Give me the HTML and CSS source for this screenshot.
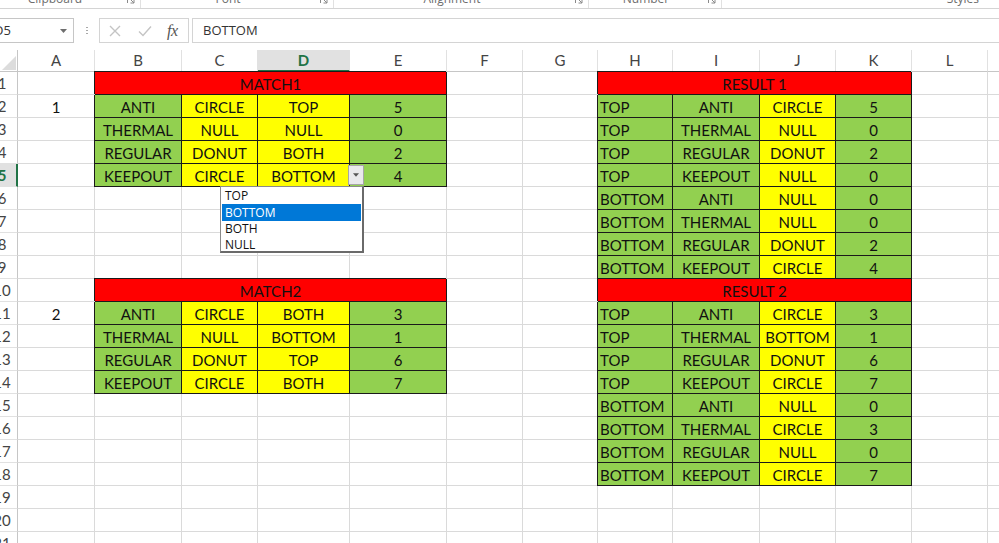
FILE: index.html
```html
<!DOCTYPE html>
<html>
<head>
<meta charset="utf-8">
<link rel="stylesheet" href="styles.css">
</head>
<body>
<div class="app">
  <div class="ribbon">
    <div class="grp g1"><span>Clipboard</span><svg class="launch" viewBox="0 0 8 8"><path d="M0.5 7V0.5H7M2.5 2.5l4.5 4.5M7 3.5V7H3.5"/></svg></div>
    <div class="grp g2"><span>Font</span><svg class="launch" viewBox="0 0 8 8"><path d="M0.5 7V0.5H7M2.5 2.5l4.5 4.5M7 3.5V7H3.5"/></svg></div>
    <div class="grp g3"><span>Alignment</span><svg class="launch" viewBox="0 0 8 8"><path d="M0.5 7V0.5H7M2.5 2.5l4.5 4.5M7 3.5V7H3.5"/></svg></div>
    <div class="grp g4"><span>Number</span><svg class="launch" viewBox="0 0 8 8"><path d="M0.5 7V0.5H7M2.5 2.5l4.5 4.5M7 3.5V7H3.5"/></svg></div>
    <div class="grp g5"><span>Styles</span></div>
  </div>

  <div class="fbar">
    <div class="namebox"><span class="nbtext">D5</span><svg class="nbarrow" viewBox="0 0 7 4"><path d="M0 0h7L3.5 4z"/></svg></div>
    <div class="dots"><i></i><i></i><i></i></div>
    <div class="fxbox">
      <svg class="ico" viewBox="0 0 12 12"><path d="M1 1l10 10M11 1L1 11"/></svg>
      <svg class="ico" viewBox="0 0 14 12"><path d="M1 6.5l4 4L13 1.5"/></svg>
      <span class="fx">fx</span>
    </div>
    <div class="finput">BOTTOM</div>
  </div>

  <div class="sheet">
    <!-- header row -->
    <div class="corner"><svg viewBox="0 0 18 22"><path d="M16 6v14H2z"/></svg></div>
    <div class="ch">A</div><div class="ch">B</div><div class="ch">C</div><div class="ch act">D</div><div class="ch">E</div><div class="ch">F</div><div class="ch">G</div><div class="ch">H</div><div class="ch">I</div><div class="ch">J</div><div class="ch">K</div><div class="ch">L</div><div class="ch">M</div>

    <!-- row 1 -->
    <div class="rh"><span>1</span></div><div class="c"></div>
    <div class="c r m4">MATCH1</div>
    <div class="c"></div><div class="c"></div>
    <div class="c r m4">RESULT 1</div>
    <div class="c"></div><div class="c"></div>

    <!-- row 2 -->
    <div class="rh"><span>2</span></div><div class="c">1</div>
    <div class="c g fl">ANTI</div><div class="c y">CIRCLE</div><div class="c y">TOP</div><div class="c g">5</div>
    <div class="c"></div><div class="c"></div>
    <div class="c g fl l">TOP</div><div class="c g">ANTI</div><div class="c y">CIRCLE</div><div class="c g">5</div>
    <div class="c"></div><div class="c"></div>

    <!-- row 3 -->
    <div class="rh"><span>3</span></div><div class="c"></div>
    <div class="c g fl">THERMAL</div><div class="c y">NULL</div><div class="c y">NULL</div><div class="c g">0</div>
    <div class="c"></div><div class="c"></div>
    <div class="c g fl l">TOP</div><div class="c g">THERMAL</div><div class="c y">NULL</div><div class="c g">0</div>
    <div class="c"></div><div class="c"></div>

    <!-- row 4 -->
    <div class="rh"><span>4</span></div><div class="c"></div>
    <div class="c g fl">REGULAR</div><div class="c y">DONUT</div><div class="c y">BOTH</div><div class="c g">2</div>
    <div class="c"></div><div class="c"></div>
    <div class="c g fl l">TOP</div><div class="c g">REGULAR</div><div class="c y">DONUT</div><div class="c g">2</div>
    <div class="c"></div><div class="c"></div>

    <!-- row 5 -->
    <div class="rh act"><span>5</span></div><div class="c"></div>
    <div class="c g fl">KEEPOUT</div><div class="c y">CIRCLE</div>
    <div class="c y cur">BOTTOM
      <div class="ddbtn"><svg viewBox="0 0 7 4"><path d="M0 0h7L3.5 4z"/></svg></div>
      <ul class="ddlist">
        <li>TOP</li>
        <li class="sel">BOTTOM</li>
        <li>BOTH</li>
        <li>NULL</li>
      </ul>
    </div>
    <div class="c g">4</div>
    <div class="c"></div><div class="c"></div>
    <div class="c g fl l">TOP</div><div class="c g">KEEPOUT</div><div class="c y">NULL</div><div class="c g">0</div>
    <div class="c"></div><div class="c"></div>

    <!-- row 6 -->
    <div class="rh"><span>6</span></div><div class="c"></div>
    <div class="c"></div><div class="c"></div><div class="c"></div><div class="c"></div>
    <div class="c"></div><div class="c"></div>
    <div class="c g fl l">BOTTOM</div><div class="c g">ANTI</div><div class="c y">NULL</div><div class="c g">0</div>
    <div class="c"></div><div class="c"></div>

    <!-- row 7 -->
    <div class="rh"><span>7</span></div><div class="c"></div>
    <div class="c"></div><div class="c"></div><div class="c"></div><div class="c"></div>
    <div class="c"></div><div class="c"></div>
    <div class="c g fl l">BOTTOM</div><div class="c g">THERMAL</div><div class="c y">NULL</div><div class="c g">0</div>
    <div class="c"></div><div class="c"></div>

    <!-- row 8 -->
    <div class="rh"><span>8</span></div><div class="c"></div>
    <div class="c"></div><div class="c"></div><div class="c"></div><div class="c"></div>
    <div class="c"></div><div class="c"></div>
    <div class="c g fl l">BOTTOM</div><div class="c g">REGULAR</div><div class="c y">DONUT</div><div class="c g">2</div>
    <div class="c"></div><div class="c"></div>

    <!-- row 9 -->
    <div class="rh"><span>9</span></div><div class="c"></div>
    <div class="c"></div><div class="c"></div><div class="c"></div><div class="c"></div>
    <div class="c"></div><div class="c"></div>
    <div class="c g fl l">BOTTOM</div><div class="c g">KEEPOUT</div><div class="c y">CIRCLE</div><div class="c g">4</div>
    <div class="c"></div><div class="c"></div>

    <!-- row 10 -->
    <div class="rh"><span>10</span></div><div class="c"></div>
    <div class="c r m4">MATCH2</div>
    <div class="c"></div><div class="c"></div>
    <div class="c r m4">RESULT 2</div>
    <div class="c"></div><div class="c"></div>

    <!-- row 11 -->
    <div class="rh"><span>11</span></div><div class="c">2</div>
    <div class="c g fl">ANTI</div><div class="c y">CIRCLE</div><div class="c y">BOTH</div><div class="c g">3</div>
    <div class="c"></div><div class="c"></div>
    <div class="c g fl l">TOP</div><div class="c g">ANTI</div><div class="c y">CIRCLE</div><div class="c g">3</div>
    <div class="c"></div><div class="c"></div>

    <!-- row 12 -->
    <div class="rh"><span>12</span></div><div class="c"></div>
    <div class="c g fl">THERMAL</div><div class="c y">NULL</div><div class="c y">BOTTOM</div><div class="c g">1</div>
    <div class="c"></div><div class="c"></div>
    <div class="c g fl l">TOP</div><div class="c g">THERMAL</div><div class="c y">BOTTOM</div><div class="c g">1</div>
    <div class="c"></div><div class="c"></div>

    <!-- row 13 -->
    <div class="rh"><span>13</span></div><div class="c"></div>
    <div class="c g fl">REGULAR</div><div class="c y">DONUT</div><div class="c y">TOP</div><div class="c g">6</div>
    <div class="c"></div><div class="c"></div>
    <div class="c g fl l">TOP</div><div class="c g">REGULAR</div><div class="c y">DONUT</div><div class="c g">6</div>
    <div class="c"></div><div class="c"></div>

    <!-- row 14 -->
    <div class="rh"><span>14</span></div><div class="c"></div>
    <div class="c g fl">KEEPOUT</div><div class="c y">CIRCLE</div><div class="c y">BOTH</div><div class="c g">7</div>
    <div class="c"></div><div class="c"></div>
    <div class="c g fl l">TOP</div><div class="c g">KEEPOUT</div><div class="c y">CIRCLE</div><div class="c g">7</div>
    <div class="c"></div><div class="c"></div>

    <!-- row 15 -->
    <div class="rh"><span>15</span></div><div class="c"></div>
    <div class="c"></div><div class="c"></div><div class="c"></div><div class="c"></div>
    <div class="c"></div><div class="c"></div>
    <div class="c g fl l">BOTTOM</div><div class="c g">ANTI</div><div class="c y">NULL</div><div class="c g">0</div>
    <div class="c"></div><div class="c"></div>

    <!-- row 16 -->
    <div class="rh"><span>16</span></div><div class="c"></div>
    <div class="c"></div><div class="c"></div><div class="c"></div><div class="c"></div>
    <div class="c"></div><div class="c"></div>
    <div class="c g fl l">BOTTOM</div><div class="c g">THERMAL</div><div class="c y">CIRCLE</div><div class="c g">3</div>
    <div class="c"></div><div class="c"></div>

    <!-- row 17 -->
    <div class="rh"><span>17</span></div><div class="c"></div>
    <div class="c"></div><div class="c"></div><div class="c"></div><div class="c"></div>
    <div class="c"></div><div class="c"></div>
    <div class="c g fl l">BOTTOM</div><div class="c g">REGULAR</div><div class="c y">NULL</div><div class="c g">0</div>
    <div class="c"></div><div class="c"></div>

    <!-- row 18 -->
    <div class="rh"><span>18</span></div><div class="c"></div>
    <div class="c"></div><div class="c"></div><div class="c"></div><div class="c"></div>
    <div class="c"></div><div class="c"></div>
    <div class="c g fl l">BOTTOM</div><div class="c g">KEEPOUT</div><div class="c y">CIRCLE</div><div class="c g">7</div>
    <div class="c"></div><div class="c"></div>

    <!-- row 19 -->
    <div class="rh"><span>19</span></div><div class="c"></div>
    <div class="c"></div><div class="c"></div><div class="c"></div><div class="c"></div>
    <div class="c"></div><div class="c"></div>
    <div class="c"></div><div class="c"></div><div class="c"></div><div class="c"></div>
    <div class="c"></div><div class="c"></div>

    <!-- row 20 -->
    <div class="rh"><span>20</span></div><div class="c"></div>
    <div class="c"></div><div class="c"></div><div class="c"></div><div class="c"></div>
    <div class="c"></div><div class="c"></div>
    <div class="c"></div><div class="c"></div><div class="c"></div><div class="c"></div>
    <div class="c"></div><div class="c"></div>

    <!-- row 21 -->
    <div class="rh"><span>21</span></div><div class="c"></div>
    <div class="c"></div><div class="c"></div><div class="c"></div><div class="c"></div>
    <div class="c"></div><div class="c"></div>
    <div class="c"></div><div class="c"></div><div class="c"></div><div class="c"></div>
    <div class="c"></div><div class="c"></div>
  </div>
</div>
</body>
</html>
```

FILE: styles.css
```css
* { box-sizing: border-box; }

html, body {
  margin: 0;
  padding: 0;
  background: #ffffff;
}

.app {
  width: 999px;
  height: 543px;
  overflow: hidden;
  background: #ffffff;
}

/* ---------- ribbon group labels (cut off) ---------- */
.ribbon {
  height: 9px;
  border-bottom: 1px solid #d4d4d4;
  display: flex;
  overflow: hidden;
  font-family: "Open Sans", "Liberation Sans", sans-serif;
  font-size: 12px;
  color: #6d6d6d;
}

.grp {
  position: relative;
  height: 8px;
  display: flex;
  justify-content: center;
  border-right: 1px solid #e1e1e1;
  padding-right: 18px;
  flex: none;
}

.grp span {
  line-height: 12px;
  margin-top: -7px;
  white-space: nowrap;
}

.g1 { width: 141px; padding-right: 30px; }
.g2 { width: 193px; }
.g3 { width: 255px; }
.g4 { width: 133px; }
.g5 { flex: 1; justify-content: flex-end; padding-right: 20px; border-right: none; }

.launch {
  position: absolute;
  right: 5px;
  top: -4px;
  width: 8px;
  height: 8px;
  fill: none;
  stroke: #8a8a8a;
  stroke-width: 1;
}

/* ---------- formula bar ---------- */
.fbar {
  margin-top: 9px;
  height: 25px;
  display: flex;
  font-family: "Open Sans", "Liberation Sans", sans-serif;
  font-size: 13px;
  color: #333333;
}

.namebox {
  width: 74px;
  border: 1px solid #c6c6c6;
  border-left: none;
  display: flex;
  align-items: center;
  justify-content: space-between;
  padding-right: 6px;
  overflow: hidden;
}

.nbtext {
  margin-left: -6px;
  line-height: 23px;
}

.nbarrow {
  width: 7px;
  height: 4px;
  fill: #6e6e6e;
}

.dots {
  width: 25px;
  display: flex;
  flex-direction: column;
  align-items: center;
  justify-content: center;
  gap: 2px;
}

.dots i {
  display: block;
  width: 2px;
  height: 1px;
  background: #a8a8a8;
}

.fxbox {
  width: 90px;
  border: 1px solid #d4d4d4;
  display: flex;
  align-items: center;
  padding-left: 9px;
}

.ico {
  width: 12px;
  height: 12px;
  fill: none;
  stroke: #c4c4c4;
  stroke-width: 1.4;
  margin-right: 17px;
}

.ico + .ico {
  width: 14px;
  margin-right: 15px;
}

.fx {
  font-family: "Liberation Serif", "DejaVu Serif", serif;
  font-style: italic;
  font-size: 16px;
  color: #555555;
  letter-spacing: -0.5px;
}

.finput {
  flex: 1;
  margin-left: 3px;
  border: 1px solid #d4d4d4;
  border-right: none;
  padding-left: 10px;
  line-height: 23px;
  color: #333333;
}

/* ---------- sheet grid ---------- */
.sheet {
  margin-top: 7px;
  display: grid;
  grid-template-columns: 18px 77px 87px 76px 92px 97px 76px 75px 75px 87px 76px 76px 76px 60px;
  grid-template-rows: 22px repeat(21, 23px);
  height: 493px;
  overflow: hidden;
  font-family: Lato, "Liberation Sans", sans-serif;
  font-size: 15px;
}

.corner {
  border-right: 1px solid #c6c6c6;
  border-bottom: 1px solid #c6c6c6;
}

.corner svg {
  display: block;
  width: 18px;
  height: 22px;
  fill: #dcdcdc;
}

.ch {
  border-right: 1px solid #e1e1e1;
  border-bottom: 1px solid #c6c6c6;
  text-align: center;
  line-height: 21px;
  color: #444444;
}

.ch.act {
  background: #e1e1e1;
  color: #217346;
  font-weight: bold;
  border-bottom: 2px solid #217346;
}

.rh {
  border-right: 1px solid #c6c6c6;
  border-bottom: 1px solid #e1e1e1;
  overflow: hidden;
  color: #444444;
  line-height: 22px;
}

.rh span {
  display: block;
  width: 30px;
  margin-left: -13px;
  text-align: center;
}

.rh.act {
  background: #e1e1e1;
  color: #217346;
  font-weight: bold;
  border-right: 2px solid #217346;
}

.c {
  position: relative;
  border-right: 1px solid #dadada;
  border-bottom: 1px solid #dadada;
  text-align: center;
  line-height: 22px;
  padding-top: 1px;
  white-space: nowrap;
  color: #111111;
}

.g { background: #92d050; border-color: #1a1a1a; }
.y { background: #ffff00; border-color: #1a1a1a; }
.r { background: #ff0000; border-color: #1a1a1a; box-shadow: -1px -1px 0 #1a1a1a; }
.fl { box-shadow: -1px 0 0 #1a1a1a; }
.l { text-align: left; padding-left: 2px; }
.m4 { grid-column: span 4; }

/* ---------- data validation dropdown ---------- */
.ddbtn {
  position: absolute;
  left: 90px;
  top: 1px;
  width: 16px;
  height: 20px;
  background: #e9e9ec;
  border: 1px solid #a6a6a6;
  display: flex;
  align-items: center;
  justify-content: center;
  z-index: 4;
}

.ddbtn svg {
  width: 6px;
  height: 4px;
  fill: #555555;
}

.ddlist {
  position: absolute;
  left: -38px;
  top: 22px;
  width: 144px;
  height: 67px;
  margin: 0;
  padding: 1px 1px 0;
  list-style: none;
  background: #ffffff;
  border: 1px solid #8a8a8a;
  border-right-width: 2px;
  border-bottom-width: 2px;
  border-right-color: #6a6a6a;
  border-bottom-color: #6a6a6a;
  z-index: 5;
  text-align: left;
  font-family: "Open Sans", "Liberation Sans", sans-serif;
  font-size: 12px;
  color: #111111;
}

.ddlist li {
  height: 16px;
  line-height: 16px;
  padding-left: 3px;
}

.ddlist li.sel {
  background: #0078d7;
  color: #ffffff;
  height: 17px;
  line-height: 17px;
}
```
